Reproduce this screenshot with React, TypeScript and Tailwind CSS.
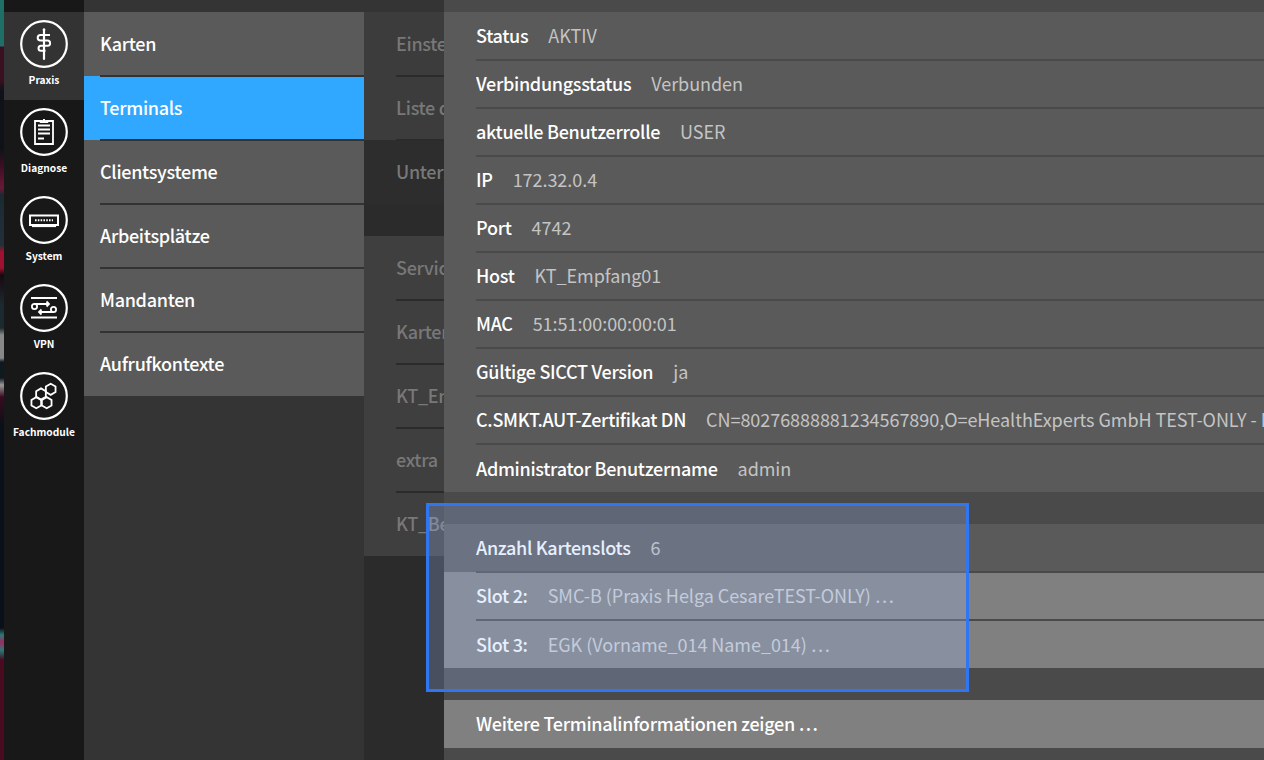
import React from 'react';

const hex = (cx: number, cy: number, r = 5.6) =>
  [0, 1, 2, 3, 4, 5]
    .map((i) => {
      const a = (Math.PI / 3) * i - Math.PI / 2;
      return `${(cx + r * Math.cos(a)).toFixed(2)},${(cy + r * Math.sin(a)).toFixed(2)}`;
    })
    .join(' ');

const Ring = ({ children }: { children: React.ReactNode }) => (
  <svg className="w-12 h-12" viewBox="0 0 48 48" fill="none" stroke="white" strokeWidth="1.8">
    <circle cx="24" cy="24" r="22.8" strokeWidth="2.2" />
    {children}
  </svg>
);

const PraxisIcon = () => (
  <Ring>
    <path d="M24 9.500v29.500" strokeWidth="2.200" strokeLinecap="round" />
    <circle cx="24" cy="9.800" r="1.300" fill="white" stroke="none" />
    <path d="M30 15H20.500a2.800 2.800 0 0 0 0 5.600H27.500a2.600 2.600 0 0 1 0 5.200H21a2.500 2.500 0 0 0 0 5h4.500" strokeWidth="2" />
  </Ring>
);

const DiagnoseIcon = () => (
  <Ring>
    <path d="M20 13h-5v23h18V13h-5" strokeWidth="1.800" />
    <path d="M20 14.500v-2h2.500l1.500-1.500 1.500 1.500H28v2z" fill="white" strokeWidth="1" />
    <path d="M18 17.500h12M18 21.500h12M18 25.500h12M18 30.500h6" strokeWidth="2" />
  </Ring>
);

const SystemIcon = () => (
  <Ring>
    <rect x="10" y="19.500" width="28" height="9.500" strokeWidth="2" />
    <path d="M15 24.200h18" strokeWidth="2" strokeDasharray="1.600 1.200" />
    <path d="M12 30.500h24" strokeWidth="1.200" />
  </Ring>
);

const VpnIcon = () => (
  <Ring>
    <path d="M11 14h26M11 33.500h26" strokeWidth="1.800" />
    <circle cx="14.500" cy="22.500" r="2.600" />
    <circle cx="33.500" cy="25.500" r="2.600" />
    <path d="M14.500 20H29M26.500 17.500 29 20l-2.500 2.500" />
    <path d="M33.500 28H19M21.500 25.500 19 28l2.500 2.500" />
  </Ring>
);

const FachmoduleIcon = () => (
  <Ring>
    <polygon points={hex(30.7, 17.3)} />
    <polygon points={hex(21, 22)} />
    <polygon points={hex(16.3, 30.7)} />
    <polygon points={hex(26.7, 30.7)} />
  </Ring>
);

const sideItems = [
  { label: 'Praxis', icon: <PraxisIcon />, active: true },
  { label: 'Diagnose', icon: <DiagnoseIcon /> },
  { label: 'System', icon: <SystemIcon /> },
  { label: 'VPN', icon: <VpnIcon /> },
  { label: 'Fachmodule', icon: <FachmoduleIcon /> },
];

const menuItems = ['Karten', 'Terminals', 'Clientsysteme', 'Arbeitsplätze', 'Mandanten', 'Aufrufkontexte'];

const infoRows = [
  ['Status', 'AKTIV'],
  ['Verbindungsstatus', 'Verbunden'],
  ['aktuelle Benutzerrolle', 'USER'],
  ['IP', '172.32.0.4'],
  ['Port', '4742'],
  ['Host', 'KT_Empfang01'],
  ['MAC', '51:51:00:00:00:01'],
  ['Gültige SICCT Version', 'ja'],
  ['C.SMKT.AUT-Zertifikat DN', 'CN=80276888881234567890,O=eHealthExperts GmbH TEST-ONLY - Noncommercial'],
  ['Administrator Benutzername', 'admin'],
];

const slotRows = [
  ['Slot 2:', 'SMC-B (Praxis Helga CesareTEST-ONLY) …'],
  ['Slot 3:', 'EGK (Vorname_014 Name_014) …'],
];

const Row = ({ label, value, last, light }: { label: string; value?: string; last?: boolean; light?: boolean }) => (
  <div className={`h-12 pl-8 ${light ? 'bg-[#808080]' : 'bg-[#5a5a5a]'}`}>
    <div className={`relative z-10 h-[49px] flex items-center gap-5 whitespace-nowrap overflow-hidden pb-0.5 ${last ? '' : 'border-b-2 border-[#4a4a4a]'}`}>
      <span className="font-medium tracking-[-0.3px] text-white">{label}</span>
      {value && <span className={`tracking-[-0.05px] ${light ? 'text-[#cfcfcf]' : 'text-[#c4c4c4]'}`}>{value}</span>}
    </div>
  </div>
);

const BackRow = ({ label, dark, last }: { label: string; dark?: boolean; last?: boolean }) => (
  <div className={`h-16 pl-8 ${dark ? 'bg-[#2d2d2d]' : ''}`}>
    <div className={`relative z-10 h-[65px] flex items-center pb-0.5 whitespace-nowrap overflow-hidden text-[#787878] font-medium tracking-[-0.3px] ${dark || last ? 'border-b-2 border-transparent' : 'border-b-2 border-[#2b2b2b]'}`}>
      {label}
    </div>
  </div>
);

export default function App() {
  return (
    <div className="relative flex h-[760px] w-full overflow-hidden bg-[#2b2b2b] text-lg leading-6 font-['Noto_Sans_CJK_SC','Source_Sans_Pro',sans-serif]">
      <div className="w-1 shrink-0 bg-[linear-gradient(to_bottom,#1f6f69_0,#1f6f69_46px,#3a1020_47px,#3a1020_80px,#10121a_90px,#10121a_150px,#3a0f22_165px,#6a1838_188px,#1a2a32_195px,#22303a_245px,#a01030_252px,#a01030_268px,#180810_275px,#1c2a30_305px,#1c2a30_328px,#888888_335px,#888888_358px,#0f1a20_362px,#0f1a20_378px,#999999_385px,#3a0a20_397px,#0a1018_425px,#0a1018_628px,#2a7a78_635px,#a02860_642px,#2a7a78_650px,#4a0a20_660px,#4a0a20_760px)]" />

      <nav className="w-20 shrink-0 bg-[#181818] pt-3">
        {sideItems.map((item) => (
          <div key={item.label} className={`h-[88px] pt-2 flex flex-col items-center ${item.active ? 'bg-[#333333]' : ''}`}>
            {item.icon}
            <span className="mt-[3px] text-[10.2px] leading-[18px] font-bold text-white">{item.label}</span>
          </div>
        ))}
      </nav>

      <div className="w-[280px] shrink-0 bg-[#343434] pt-3">
        {menuItems.map((item, i) => (
          <div key={item} className={`h-16 pl-4 ${item === 'Terminals' ? 'bg-[#31a8ff]' : 'bg-[#5a5a5a]'}`}>
            <div className={`relative z-10 h-[65px] flex items-center pb-0.5 font-medium tracking-[-0.3px] text-white border-b-2 ${i === menuItems.length - 1 ? 'border-transparent' : 'border-[#333333]'}`}>
              {item}
            </div>
          </div>
        ))}
      </div>

      <div className="w-20 shrink-0 bg-[#2b2b2b] overflow-hidden">
        <div className="bg-[#343434] pt-3">
          <div className="bg-[#3c3c3c] w-[280px]">
            <BackRow label="Einstellungen" />
            <BackRow label="Liste der Terminals" />
            <BackRow label="Unterstützte Versionen" dark />
          </div>
        </div>
        <div className="mt-8 bg-[#3f3f3f] w-[280px]">
          <BackRow label="Service" />
          <BackRow label="Kartenterminal" />
          <BackRow label="KT_Empfang01" />
          <BackRow label="extra" />
          <BackRow label="KT_Beispiel" last />
        </div>
      </div>

      <main className="flex-1 min-w-0 bg-[#4a4a4a] pt-3">
        {infoRows.map(([label, value], i) => (
          <Row key={label} label={label} value={value} last={i === infoRows.length - 1} />
        ))}
        <div className="mt-8">
          <Row label="Anzahl Kartenslots" value="6" />
          {slotRows.map(([label, value], i) => (
            <Row key={label} label={label} value={value} light last={i === slotRows.length - 1} />
          ))}
        </div>
        <div className="mt-8 h-12 pl-8 bg-[#808080] flex items-center pb-0.5">
          <span className="font-medium tracking-[-0.3px] text-white">Weitere Terminalinformationen zeigen …</span>
        </div>
      </main>

      <div className="absolute left-[426px] top-[503px] z-20 w-[543px] h-[189px] border-[3px] border-[#2f76f0] bg-[#a0beff]/25" />
    </div>
  );
}
